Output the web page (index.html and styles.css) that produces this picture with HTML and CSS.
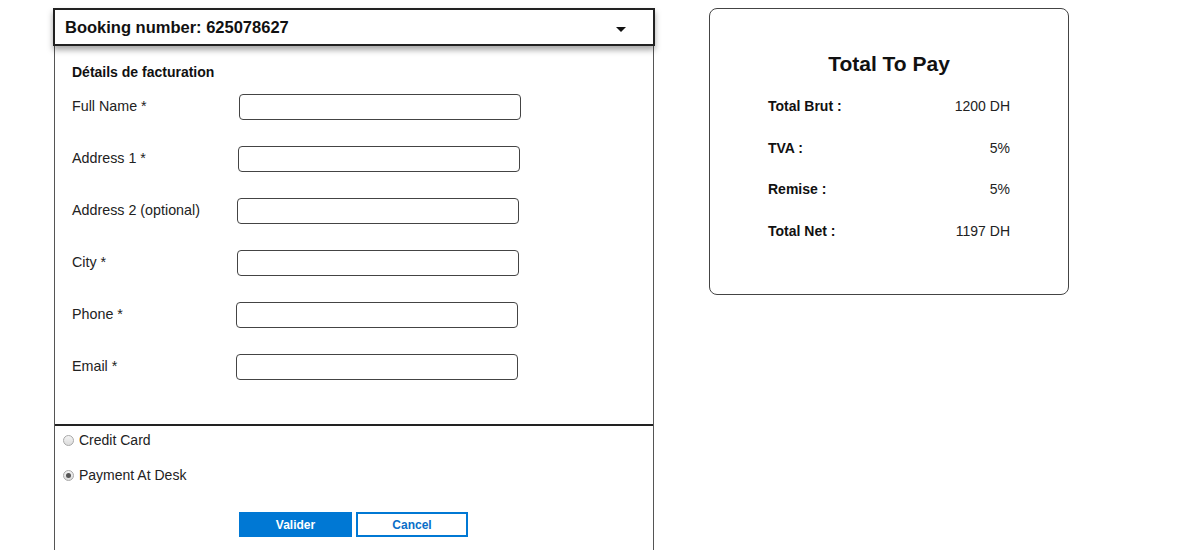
FILE: index.html
```html
<!DOCTYPE html>
<html>
<head>
<meta charset="utf-8">
<link rel="stylesheet" href="styles.css">
</head>
<body>
<div class="page">
  <div class="panel">
    <div class="header">
      <span class="htext">Booking number: 625078627</span>
      <span class="caret"></span>
    </div>
    <div class="body">
      <div class="billing">
        <div class="section-title">Détails de facturation</div>
        <div class="form">
          <label class="lbl">Full Name *</label><input class="inp s0" type="text">
          <label class="lbl">Address 1 *</label><input class="inp s1" type="text">
          <label class="lbl">Address 2 (optional)</label><input class="inp s2" type="text">
          <label class="lbl">City *</label><input class="inp s2" type="text">
          <label class="lbl">Phone *</label><input class="inp s3" type="text">
          <label class="lbl">Email *</label><input class="inp s3" type="text">
        </div>
      </div>
      <div class="payment">
        <div class="radio-row"><span class="radio"></span><span>Credit Card</span></div>
        <div class="radio-row"><span class="radio checked"></span><span>Payment At Desk</span></div>
        <div class="buttons">
          <button class="btn primary">Valider</button>
          <button class="btn secondary">Cancel</button>
        </div>
      </div>
    </div>
  </div>
  <div class="card">
    <div class="card-title">Total To Pay</div>
    <div class="totals">
      <div class="trow"><span class="tl">Total Brut :</span><span class="tv">1200 DH</span></div>
      <div class="trow"><span class="tl">TVA :</span><span class="tv">5%</span></div>
      <div class="trow"><span class="tl">Remise :</span><span class="tv">5%</span></div>
      <div class="trow"><span class="tl">Total Net :</span><span class="tv">1197 DH</span></div>
    </div>
  </div>
</div>
</body>
</html>
```
FILE: styles.css
```css
* { box-sizing: border-box; }
html, body { margin: 0; padding: 0; background: #fff; }
body {
  font-family: "Liberation Sans", Arial, sans-serif;
  color: #222;
  height: 550px;
  overflow: hidden;
}
.page {
  display: flex;
  align-items: flex-start;
  padding: 8px 0 0 53px;
  gap: 54px;
}
.panel {
  width: 602px;
  height: 542px;
  display: flex;
  flex-direction: column;
}
.header {
  height: 38px;
  border: 2px solid #222;
  display: flex;
  align-items: center;
  justify-content: space-between;
  padding: 1px 27px 0 10px;
  font-weight: bold;
  font-size: 16.5px;
  color: #111;
  box-shadow: 0 4px 6px rgba(0, 0, 0, 0.35);
  position: relative;
  z-index: 1;
}
.caret {
  width: 0;
  height: 0;
  border-left: 5px solid transparent;
  border-right: 5px solid transparent;
  border-top: 5px solid #111;
  margin-top: 3px;
}
.body {
  flex: 1;
  border-left: 1px solid #555;
  border-right: 1px solid #555;
  margin: 0 1px 0 1px;
  display: flex;
  flex-direction: column;
}
.billing {
  padding: 18px 0 44px 17px;
  border-bottom: 2px solid #222;
}
.section-title {
  font-weight: bold;
  font-size: 14px;
  line-height: 17px;
  color: #111;
  margin-bottom: 13px;
}
.form {
  display: grid;
  grid-template-columns: 166px 282px;
  row-gap: 26px;
  align-items: center;
}
.lbl {
  font-size: 14.3px;
  line-height: 16px;
  color: #222;
  margin-top: -2px;
}
.inp {
  height: 26px;
  width: 282px;
  border: 1px solid #444;
  border-radius: 4px;
  background: #fff;
  margin: 0;
  padding: 0 6px;
  font: inherit;
}
.s0 { margin-left: 1px; }
.s1 { margin-left: 0; }
.s2 { margin-left: -1px; }
.s3 { margin-left: -2px; }
.payment {
  padding: 4px 0 0 8px;
  display: flex;
  flex-direction: column;
}
.radio-row {
  display: flex;
  align-items: center;
  gap: 5px;
  font-size: 14px;
  line-height: 20px;
  height: 20px;
  color: #222;
  margin-bottom: 15px;
}
.radio {
  width: 11px;
  height: 11px;
  border-radius: 50%;
  border: 1px solid #a8a8a8;
  background: linear-gradient(#f4f4f4, #dcdcdc);
  display: inline-flex;
  align-items: center;
  justify-content: center;
}
.radio.checked::after {
  content: "";
  width: 5px;
  height: 5px;
  border-radius: 50%;
  background: #555;
}
.buttons {
  display: flex;
  justify-content: center;
  gap: 4px;
  margin-top: 12px;
  padding-right: 9px;
}
.btn {
  height: 25px;
  width: 113px;
  font-family: "Liberation Sans", Arial, sans-serif;
  font-weight: bold;
  font-size: 12px;
  margin: 0;
  padding: 0;
}
.primary {
  background: #0078d4;
  color: #fff;
  border: 1px solid #0078d4;
}
.secondary {
  background: #fff;
  color: #0a6ec8;
  border: 2px solid #0078d4;
  width: 112px;
}
.card {
  width: 360px;
  height: 287px;
  border: 1px solid #444;
  border-radius: 8px;
  padding: 42px 58px 0 58px;
}
.card-title {
  text-align: center;
  font-weight: bold;
  font-size: 21px;
  line-height: 25px;
  color: #111;
  margin-bottom: 22px;
}
.totals {
  display: flex;
  flex-direction: column;
  gap: 25.5px;
}
.trow {
  display: flex;
  justify-content: space-between;
  font-size: 14px;
  line-height: 16px;
}
.tl { font-weight: bold; color: #111; }
.tv { color: #222; }
```
